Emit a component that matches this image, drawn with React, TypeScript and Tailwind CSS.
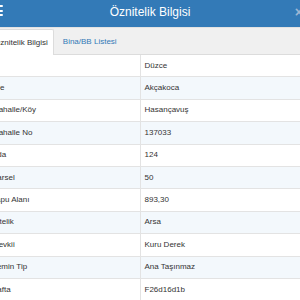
import React from "react"

const rows = [
  { label: "İl", value: "Düzce" },
  { label: "İlçe", value: "Akçakoca" },
  { label: "Mahalle/Köy", value: "Hasançavuş" },
  { label: "Mahalle No", value: "137033" },
  { label: "Ada", value: "124" },
  { label: "Parsel", value: "50" },
  { label: "Tapu Alanı", value: "893,30" },
  { label: "Nitelik", value: "Arsa" },
  { label: "Mevkii", value: "Kuru Derek" },
  { label: "Zemin Tip", value: "Ana Taşınmaz" },
  { label: "Pafta", value: "F26d16d1b" },
]

export default function App() {
  return (
    <div className="w-[300px] h-[300px] overflow-hidden bg-white text-[#333] font-['Liberation_Sans',Arial,sans-serif]">
      {/* Header */}
      <div className="h-[27px] bg-[#337ab7] flex items-center pb-[3px]">
        <div className="w-[40px] flex self-start mt-[5px]">
          <div className="-ml-[8px] w-[11px] flex flex-col gap-[2.6px]">
            <div className="h-[2px] bg-white rounded-sm" />
            <div className="h-[2px] bg-white rounded-sm" />
            <div className="h-[2px] bg-white rounded-sm" />
          </div>
        </div>
        <div className="flex-1 text-center text-white text-[12px] leading-[12px]">Öznitelik Bilgisi</div>
        <div className="w-[40px] flex justify-end">
          <span className="-mr-[3px] text-[14px] leading-[14px] font-bold text-[#9db6d3]">×</span>
        </div>
      </div>

      {/* Tabs */}
      <div className="h-[28px] bg-[#f0f0f0] border-t border-b border-[#e2e2e2] border-b-[#dcdcdc] flex items-end text-[8px]">
        <div className="-ml-[15px] h-[26px] -mb-[1px] bg-white border border-b-0 border-[#dcdcdc] pl-[8px] pr-[5.5px] flex items-center rounded-t-[2px]">
          Öznitelik Bilgisi
        </div>
        <div className="ml-[2px] h-[25px] pl-[6.5px] pr-[6px] flex items-center text-[#337ab7]">Bina/BB Listesi</div>
      </div>

      {/* Table */}
      <div className="-ml-[16px] w-[340px] text-[8px]">
        {rows.map((r, i) => (
          <div
            key={r.label}
            className={
              i % 2 === 1
                ? "h-[22.4px] flex border-b border-[#e3e3e3] bg-[#f3f8fc]"
                : "h-[22.4px] flex border-b border-[#e3e3e3] bg-white"
            }
          >
            <div className="w-[156px] pl-[8px] flex items-center">{r.label}</div>
            <div className="flex-1 border-l border-[#e3e3e3] pl-[3.5px] flex items-center">{r.value}</div>
          </div>
        ))}
      </div>
    </div>
  )
}
